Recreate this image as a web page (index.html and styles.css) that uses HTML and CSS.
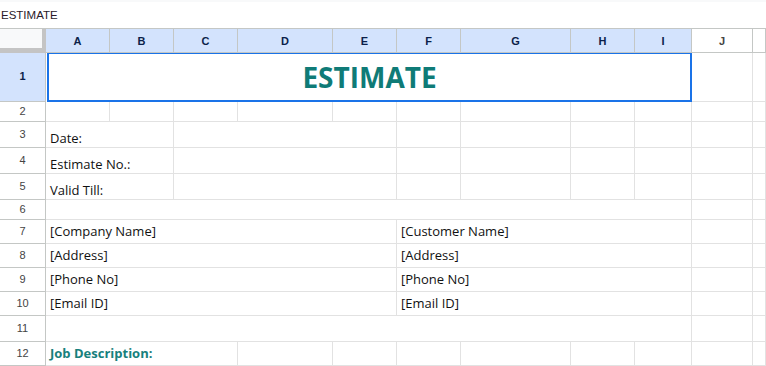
FILE: index.html
```html
<!DOCTYPE html>
<html lang="en">
<head>
  <meta charset="UTF-8">
  <title>Estimate</title>
  <link rel="stylesheet" href="styles.css">
</head>
<body>

  <!-- Barra de formula -->
  <div class="formula">ESTIMATE</div>

  <!-- Hoja -->
  <div class="sheet">
    <div class="corner"></div>
    <div class="colhead sel">A</div>
    <div class="colhead sel">B</div>
    <div class="colhead sel">C</div>
    <div class="colhead sel">D</div>
    <div class="colhead sel">E</div>
    <div class="colhead sel">F</div>
    <div class="colhead sel">G</div>
    <div class="colhead sel">H</div>
    <div class="colhead sel">I</div>
    <div class="colhead">J</div>
    <div class="colhead"></div>

    <div class="rowhead sel">1</div>
    <div class="cell title span9">ESTIMATE</div>
    <div class="cell"></div>
    <div class="cell"></div>

    <div class="rowhead">2</div>
    <div class="cell"></div><div class="cell"></div><div class="cell"></div><div class="cell"></div>
    <div class="cell"></div><div class="cell"></div><div class="cell"></div><div class="cell"></div>
    <div class="cell"></div><div class="cell"></div><div class="cell"></div>

    <div class="rowhead">3</div>
    <div class="cell low span2">Date:</div>
    <div class="cell span3"></div>
    <div class="cell"></div><div class="cell"></div><div class="cell"></div><div class="cell"></div>
    <div class="cell"></div><div class="cell"></div>

    <div class="rowhead">4</div>
    <div class="cell low span2">Estimate No.:</div>
    <div class="cell span3"></div>
    <div class="cell"></div><div class="cell"></div><div class="cell"></div><div class="cell"></div>
    <div class="cell"></div><div class="cell"></div>

    <div class="rowhead">5</div>
    <div class="cell low span2">Valid Till:</div>
    <div class="cell span3"></div>
    <div class="cell"></div><div class="cell"></div><div class="cell"></div><div class="cell"></div>
    <div class="cell"></div><div class="cell"></div>

    <div class="rowhead">6</div>
    <div class="cell span9"></div>
    <div class="cell"></div><div class="cell"></div>

    <div class="rowhead">7</div>
    <div class="cell span5">[Company Name]</div>
    <div class="cell span4">[Customer Name]</div>
    <div class="cell"></div><div class="cell"></div>

    <div class="rowhead">8</div>
    <div class="cell span5">[Address]</div>
    <div class="cell span4">[Address]</div>
    <div class="cell"></div><div class="cell"></div>

    <div class="rowhead">9</div>
    <div class="cell span5">[Phone No]</div>
    <div class="cell span4">[Phone No]</div>
    <div class="cell"></div><div class="cell"></div>

    <div class="rowhead">10</div>
    <div class="cell span5">[Email ID]</div>
    <div class="cell span4">[Email ID]</div>
    <div class="cell"></div><div class="cell"></div>

    <div class="rowhead">11</div>
    <div class="cell span9"></div>
    <div class="cell"></div><div class="cell"></div>

    <div class="rowhead">12</div>
    <div class="cell span3 job">Job Description:</div>
    <div class="cell"></div><div class="cell"></div><div class="cell"></div><div class="cell"></div>
    <div class="cell"></div><div class="cell"></div><div class="cell"></div><div class="cell"></div>
  </div>

</body>
</html>
```

FILE: styles.css
```css
body {
  margin: 0;
  background: #fff;
  color: #000;
  font-family: 'Open Sans', sans-serif;
  overflow: hidden;
}

.formula {
  border-top: 2px solid #f8f9fa;
  border-bottom: 1px solid #c4c7c5;
  height: 26px;
  padding-left: 1px;
  display: flex;
  align-items: center;
  font-family: 'Liberation Sans', Arial, sans-serif;
  font-size: 11.5px;
  color: #2a1a2a;
}

.sheet {
  display: grid;
  grid-template-columns: 46px 64px 64px 64px 95px 64px 64px 110px 64px 57px 61px 13px;
  grid-template-rows: 24px 49px 20px 26px 26px 26px 20px 24px 24px 24px 24px 26px 24px;
}

.sheet > div {
  box-sizing: border-box;
  min-width: 0;
  overflow: hidden;
  white-space: nowrap;
}

.corner {
  background: #f8f9fa;
  border-right: 4px solid #c4c4c4;
  border-bottom: 5px solid #c4c4c4;
}

.colhead, .rowhead {
  display: flex;
  align-items: center;
  justify-content: center;
  border-right: 1px solid #c4c7c5;
  border-bottom: 1px solid #c4c7c5;
  font-family: 'Liberation Sans', Arial, sans-serif;
  font-size: 11px;
  color: #444;
  background: #fff;
}

.colhead {
  font-weight: bold;
}

.rowhead {
  padding-bottom: 2px;
}

.colhead.sel, .rowhead.sel {
  background: #d3e3fd;
  color: #0b1f4a;
  font-weight: bold;
}

.cell {
  display: flex;
  align-items: flex-end;
  padding: 0 4px 3px 4px;
  border-right: 1px solid #e2e2e2;
  border-bottom: 1px solid #e2e2e2;
  font-size: 13px;
  line-height: 18px;
  color: #111;
}

.cell.low {
  padding-bottom: 0;
}

.span2 { grid-column: span 2; }
.span3 { grid-column: span 3; }
.span4 { grid-column: span 4; }
.span5 { grid-column: span 5; }
.span9 { grid-column: span 9; }

.title {
  align-items: center;
  justify-content: center;
  border: 2px solid #1a73e8;
  border-top-width: 1px;
  margin-left: 1px;
  font-size: 28px;
  font-weight: bold;
  color: #0f7b77;
  padding: 0;
}

.job {
  font-weight: bold;
  color: #17807c;
}
```
